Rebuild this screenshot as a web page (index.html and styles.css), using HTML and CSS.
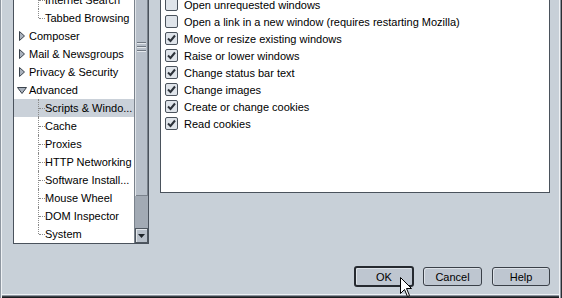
FILE: index.html
```html
<!DOCTYPE html>
<html>
<head>
<meta charset="utf-8">
<link rel="stylesheet" href="styles.css">
</head>
<body>
<div class="window">
  <div class="main">
    <div class="tree">
      <div class="tree-list">
        <div class="row child">Internet Search</div>
        <div class="row child last">Tabbed Browsing</div>
        <div class="row parent"><svg class="twisty" width="6" height="10" viewBox="0 0 6 10"><path d="M0.5 0.5L5.5 5L0.5 9.5Z" fill="#aab2bd" stroke="#3a424c"/></svg>Composer</div>
        <div class="row parent"><svg class="twisty" width="6" height="10" viewBox="0 0 6 10"><path d="M0.5 0.5L5.5 5L0.5 9.5Z" fill="#aab2bd" stroke="#3a424c"/></svg>Mail &amp; Newsgroups</div>
        <div class="row parent"><svg class="twisty" width="6" height="10" viewBox="0 0 6 10"><path d="M0.5 0.5L5.5 5L0.5 9.5Z" fill="#aab2bd" stroke="#3a424c"/></svg>Privacy &amp; Security</div>
        <div class="row parent open"><svg class="twisty-open" width="10" height="7" viewBox="0 0 10 7"><path d="M0.5 0.5L9.5 0.5L5 6.5Z" fill="#aab2bd" stroke="#3a424c"/></svg>Advanced</div>
        <div class="row child selected">Scripts &amp; Windo...</div>
        <div class="row child">Cache</div>
        <div class="row child">Proxies</div>
        <div class="row child">HTTP Networking</div>
        <div class="row child">Software Install...</div>
        <div class="row child">Mouse Wheel</div>
        <div class="row child">DOM Inspector</div>
        <div class="row child last">System</div>
      </div>
      <div class="scrollbar">
        <div class="thumb"><span class="grip"></span></div>
        <div class="track"></div>
        <div class="arrow-down"><svg width="7" height="4" viewBox="0 0 7 4"><path d="M0 0H7L3.5 4Z" fill="#1e242a"/></svg></div>
      </div>
    </div>
    <div class="panel">
      <div class="check-row"><svg class="box" width="13" height="13" viewBox="0 0 13 13"><rect x="0.5" y="0.5" width="12" height="12" rx="1.5" fill="#dfe4ea" stroke="#4a525c"/></svg>Open unrequested windows</div>
      <div class="check-row"><svg class="box" width="13" height="13" viewBox="0 0 13 13"><rect x="0.5" y="0.5" width="12" height="12" rx="1.5" fill="#dfe4ea" stroke="#4a525c"/></svg>Open a link in a new window (requires restarting Mozilla)</div>
      <div class="check-row"><svg class="box" width="13" height="13" viewBox="0 0 13 13"><rect x="0.5" y="0.5" width="12" height="12" rx="1.5" fill="#dfe4ea" stroke="#4a525c"/><path d="M3 6.5L5.5 9L10 3.5" fill="none" stroke="#2c323a" stroke-width="2"/></svg>Move or resize existing windows</div>
      <div class="check-row"><svg class="box" width="13" height="13" viewBox="0 0 13 13"><rect x="0.5" y="0.5" width="12" height="12" rx="1.5" fill="#dfe4ea" stroke="#4a525c"/><path d="M3 6.5L5.5 9L10 3.5" fill="none" stroke="#2c323a" stroke-width="2"/></svg>Raise or lower windows</div>
      <div class="check-row"><svg class="box" width="13" height="13" viewBox="0 0 13 13"><rect x="0.5" y="0.5" width="12" height="12" rx="1.5" fill="#dfe4ea" stroke="#4a525c"/><path d="M3 6.5L5.5 9L10 3.5" fill="none" stroke="#2c323a" stroke-width="2"/></svg>Change status bar text</div>
      <div class="check-row"><svg class="box" width="13" height="13" viewBox="0 0 13 13"><rect x="0.5" y="0.5" width="12" height="12" rx="1.5" fill="#dfe4ea" stroke="#4a525c"/><path d="M3 6.5L5.5 9L10 3.5" fill="none" stroke="#2c323a" stroke-width="2"/></svg>Change images</div>
      <div class="check-row"><svg class="box" width="13" height="13" viewBox="0 0 13 13"><rect x="0.5" y="0.5" width="12" height="12" rx="1.5" fill="#dfe4ea" stroke="#4a525c"/><path d="M3 6.5L5.5 9L10 3.5" fill="none" stroke="#2c323a" stroke-width="2"/></svg>Create or change cookies</div>
      <div class="check-row"><svg class="box" width="13" height="13" viewBox="0 0 13 13"><rect x="0.5" y="0.5" width="12" height="12" rx="1.5" fill="#dfe4ea" stroke="#4a525c"/><path d="M3 6.5L5.5 9L10 3.5" fill="none" stroke="#2c323a" stroke-width="2"/></svg>Read cookies</div>
    </div>
  </div>
  <div class="buttons">
    <div class="btn default">OK</div>
    <div class="btn cancel">Cancel</div>
    <div class="btn help">Help</div>
  </div>
  <svg class="cursor" width="12" height="21" viewBox="0 0 12 21"><path d="M0.5 0.5V16.5L4.5 12.5L7.5 19.5L9.5 18.5L6.5 11.5H11.5Z" fill="#fff" stroke="#000"/></svg>
</div>
</body>
</html>
```
FILE: styles.css
```css
* { box-sizing: border-box; }
html, body { margin: 0; padding: 0; }
body {
  background: #c8d0d8;
  font-family: "Liberation Sans", Arial, sans-serif;
  font-size: 11px;
  color: #000;
  overflow: hidden;
}
.window {
  position: relative;
  width: 562px;
  height: 298px;
  overflow: hidden;
  box-shadow:
    inset 1px 0 #8e96a0,
    inset 2px 0 #eef1f4,
    inset -1px 0 #2a2e33,
    inset -2px 0 #8e96a0,
    inset -3px 0 #eef1f4,
    inset 0 -1px #1a1c1f,
    inset 0 -2px #3c4046,
    inset 0 -3px #8e96a0,
    inset 0 -4px #eef1f4;
}
.main {
  display: flex;
  align-items: flex-start;
  gap: 11px;
  margin-top: -10px;
  padding-left: 13px;
}
.tree {
  display: flex;
  width: 136px;
  height: 254px;
  border: 1px solid #4a525c;
  background: #fff;
}
.tree-list { width: 120px; }
.row {
  position: relative;
  height: 18px;
  line-height: 18px;
  white-space: nowrap;
}
.parent {
  display: flex;
  align-items: center;
  padding-left: 5px;
}
.twisty { margin-right: 4px; flex: none; }
.parent.open { padding-left: 3px; }
.twisty-open { margin-right: 2px; flex: none; }
.child { padding-left: 31px; }
.child::before {
  content: "";
  position: absolute;
  left: 24px;
  top: 0;
  bottom: 0;
  border-left: 1px dotted #8a8a8a;
}
.child.last::before { bottom: 9px; }
.child::after {
  content: "";
  position: absolute;
  left: 25px;
  top: 9px;
  width: 6px;
  border-top: 1px dotted #8a8a8a;
}
.selected { background: #cad1d9; }
.scrollbar {
  width: 14px;
  display: flex;
  flex-direction: column;
  border-left: 1px solid #7a828c;
}
.thumb {
  position: relative;
  height: 205px;
  background: #b8c0ca;
  box-shadow: inset 1px 0 #e2e6ea, inset -1px -1px #7a828c;
}
.grip {
  position: absolute;
  left: 2px;
  top: 51px;
  width: 9px;
  height: 10px;
  background: repeating-linear-gradient(to bottom, #707882 0 1px, #e6eaee 1px 2px, transparent 2px 4px);
}
.track { height: 32px; background: #a2aab4; }
.arrow-down {
  height: 15px;
  background: #b8c0ca;
  border: 1px solid #4e565f;
  box-shadow: inset 1px 1px #e2e6ea;
  display: flex;
  align-items: center;
  justify-content: center;
}
.panel {
  width: 390px;
  height: 203px;
  border: 1px solid #4a525c;
  background: #fff;
  padding: 5px 0 0 4px;
}
.check-row {
  display: flex;
  align-items: center;
  gap: 6px;
  height: 17px;
  white-space: nowrap;
}
.box { flex: none; }
.buttons {
  display: flex;
  justify-content: flex-end;
  align-items: center;
  height: 21px;
  margin-top: 22px;
  padding-right: 12px;
}
.btn {
  display: flex;
  align-items: center;
  justify-content: center;
  height: 19px;
  border: 1px solid #3a4048;
  border-radius: 3px;
  background: #bec6d0;
  box-shadow: inset 1px 1px #dde2e8;
}
.btn.default {
  width: 60px;
  height: 21px;
  border: 2px solid #262a30;
}
.btn.cancel { width: 59px; margin-left: 9px; }
.btn.help { width: 58px; margin-left: 10px; }
.cursor {
  position: absolute;
  left: 400px;
  top: 277px;
}
```
